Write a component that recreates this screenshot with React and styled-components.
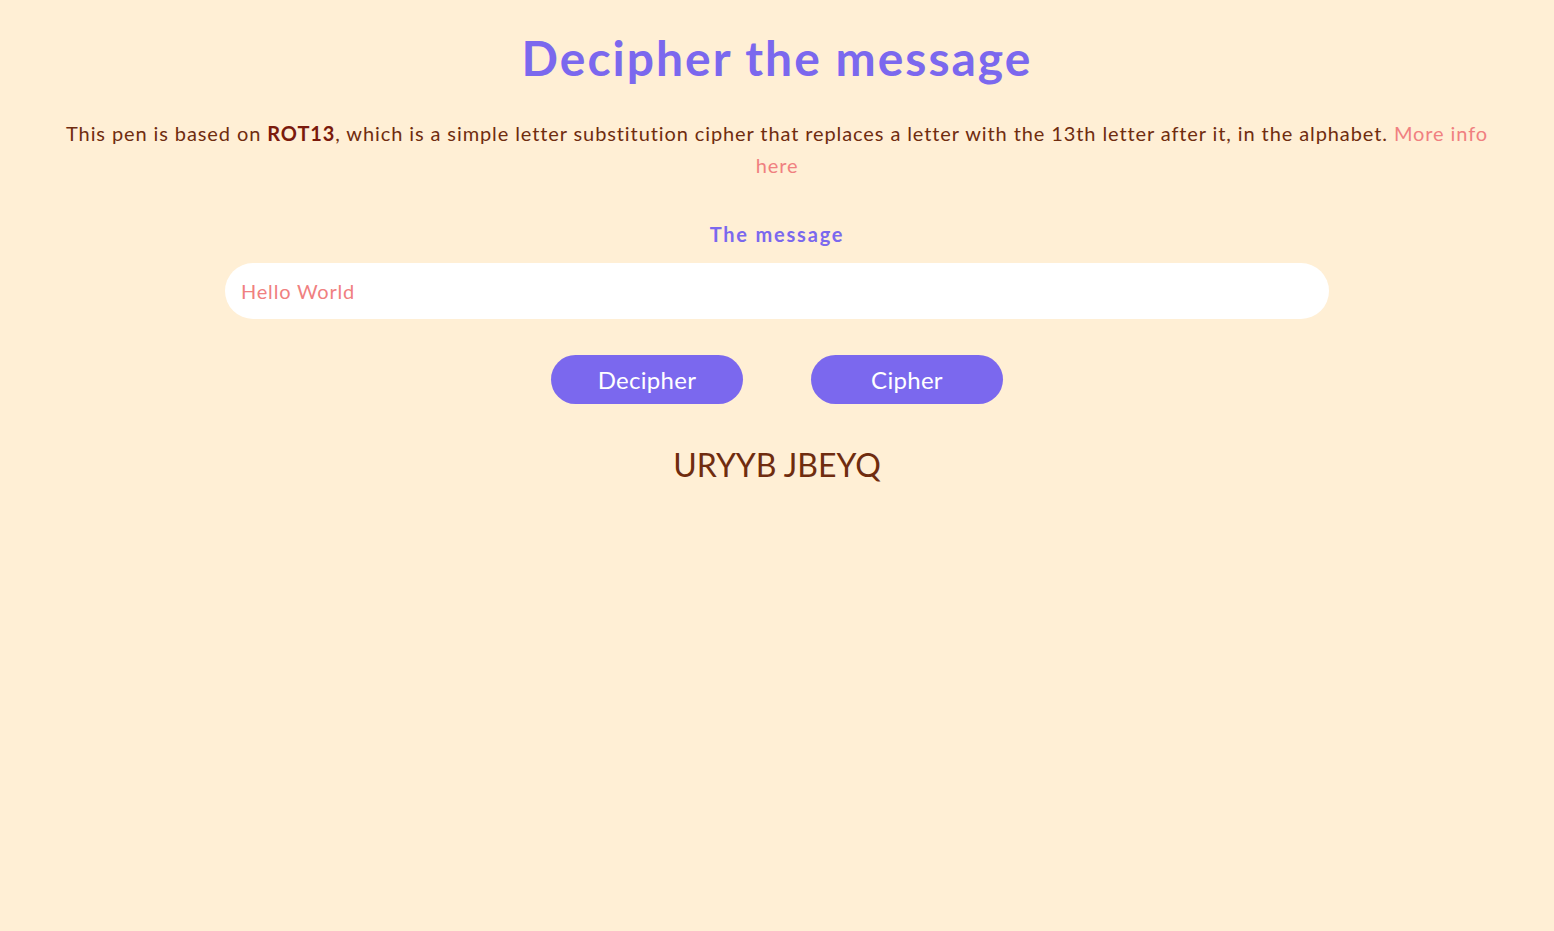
import React, { useState } from 'react';
import styled, { createGlobalStyle } from "styled-components";

const purple = "#7b68ee";
const brown = "#6f2c0f";
const coral = "#f08080";

const GlobalStyle = createGlobalStyle`
  html, body {
    margin: 0;
    padding: 0;
    background: #ffefd5;
    font-family: Lato, "Open Sans", sans-serif;
    color: ${brown};
  }
`;

const Page = styled.main`
  display: flex;
  flex-direction: column;
  align-items: center;
  text-align: center;
  padding: 28px 64px 0;
  min-height: 931px;
  box-sizing: border-box;
`;

const Title = styled.h1`
  margin: 0;
  font-size: 48px;
  line-height: 60px;
  font-weight: 700;
  letter-spacing: 2px;
  color: ${purple};
`;

const Intro = styled.p`
  margin: 29px 0 0;
  font-size: 20px;
  line-height: 32px;
  letter-spacing: 0.9px;
  max-width: 1426px;

  strong {
    color: #7a1a0c;
  }

  a {
    color: ${coral};
    text-decoration: none;
  }
`;

const Label = styled.label`
  margin-top: 37px;
  font-size: 20px;
  line-height: 32px;
  font-weight: 700;
  letter-spacing: 1.8px;
  color: ${purple};
`;

const Input = styled.input`
  margin-top: 13px;
  width: 1104px;
  height: 56px;
  box-sizing: border-box;
  border: none;
  outline: none;
  border-radius: 28px;
  background: #fff;
  padding: 0 16px;
  font-family: inherit;
  font-size: 20px;
  letter-spacing: 0.8px;
  color: ${coral};
`;

const Buttons = styled.div`
  display: flex;
  gap: 68px;
  margin-top: 36px;
`;

const Button = styled.button`
  width: 192px;
  height: 49px;
  border: none;
  border-radius: 25px;
  background: ${purple};
  color: #fff;
  font-family: inherit;
  font-size: 24px;
  letter-spacing: 0.3px;
  cursor: pointer;
`;

const Result = styled.div`
  margin-top: 41px;
  font-size: 32px;
  line-height: 40px;
  color: ${brown};
`;

const rot13 = (s) =>
  s.replace(/[a-z]/gi, (c) => {
    const base = c <= "Z" ? 65 : 97;
    return String.fromCharCode(((c.charCodeAt(0) - base + 13) % 26) + base);
  });

const App = () => {
  const [text, setText] = useState("Hello World");
  const [result, setResult] = useState("URYYB JBEYQ");

  return (
    <>
      <GlobalStyle />
      <Page>
        <Title>Decipher the message</Title>
        <Intro>
          This pen is based on <strong>ROT13</strong>, which is a simple letter
          substitution cipher that replaces a letter with the 13th letter after
          it, in the alphabet. <a href="#rot13">More info here</a>
        </Intro>
        <Label htmlFor="msg">The message</Label>
        <Input id="msg" value={text} onChange={(e) => setText(e.target.value)} />
        <Buttons>
          <Button onClick={() => setResult(rot13(text))}>Decipher</Button>
          <Button onClick={() => setResult(rot13(text).toUpperCase())}>Cipher</Button>
        </Buttons>
        <Result>{result}</Result>
      </Page>
    </>
  );
};

export default App;
